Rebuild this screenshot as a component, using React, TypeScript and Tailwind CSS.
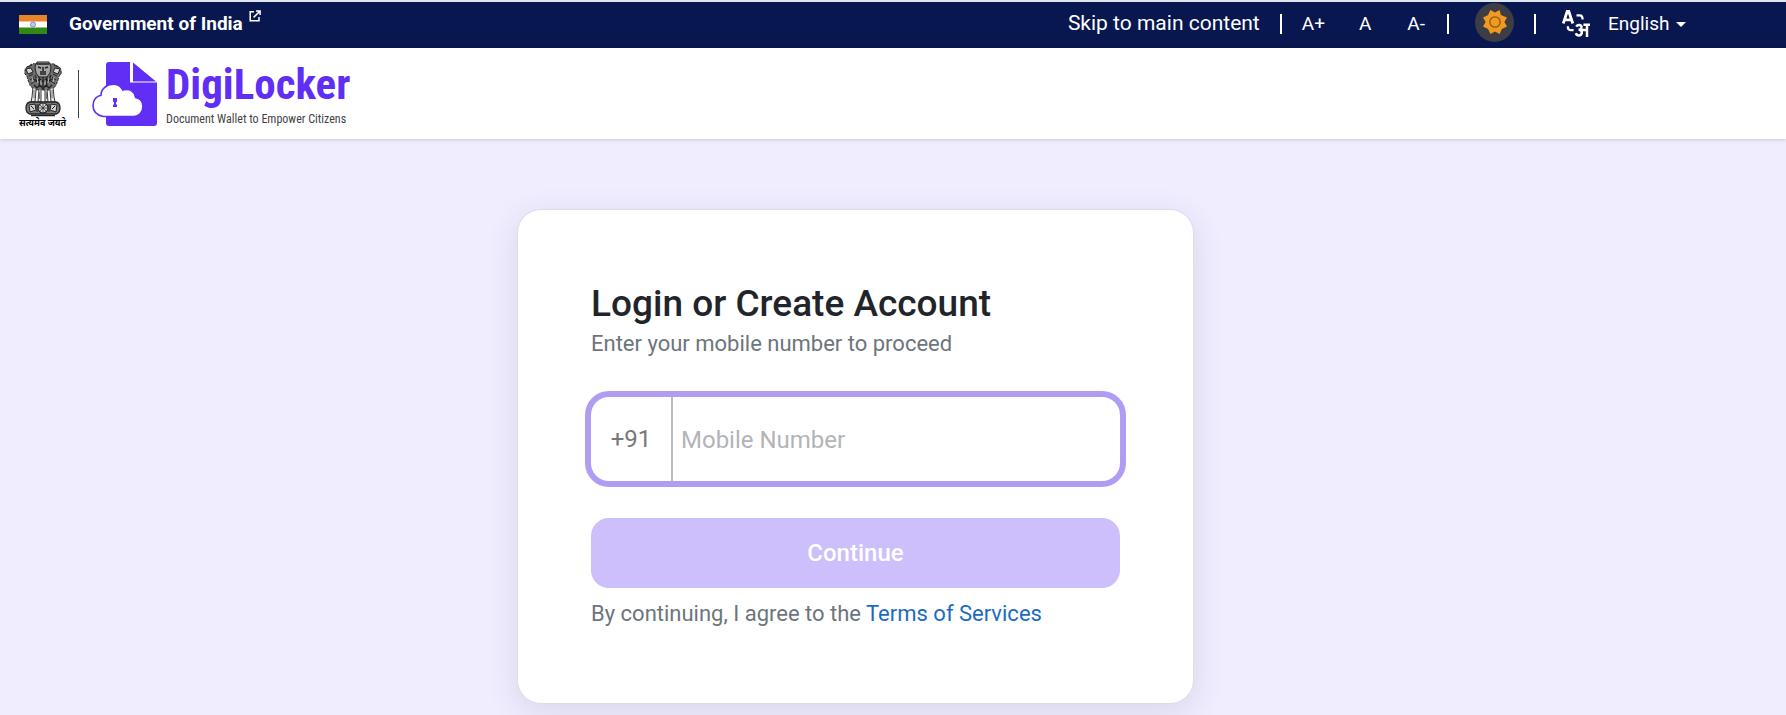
import { useState } from "react";

const FlagIcon = () => (
  <svg className="h-[19px] w-7" viewBox="0 0 28 19" aria-hidden="true">
    <rect width="28" height="19" fill="#fff" />
    <rect width="28" height="6.5" fill="#e8842a" />
    <rect y="12.5" width="28" height="6.5" fill="#2f8a12" />
    <circle cx="14" cy="9.5" r="2.6" fill="#c3c9ea" stroke="#6f78b8" strokeWidth="0.8" />
  </svg>
);

const ExternalIcon = () => (
  <svg
    className="mb-4 h-3 w-3"
    viewBox="0 0 12 12"
    fill="none"
    stroke="#fff"
    strokeWidth="1.5"
    aria-hidden="true"
  >
    <path d="M5 1.7H1.2V10.8H10V7" />
    <path d="M7 .9H11.1V5M11 1 4.6 7.4" />
  </svg>
);

const SunIcon = () => (
  <svg className="h-[26px] w-[26px]" viewBox="-13 -13 26 26" aria-hidden="true">
    <path
      fill="#f29a1f"
      d="M0-9.4 4.6-12 5.9-6.9 12-4.6 9.4 0 12 4.6 6.9 6.9 4.6 12 0 9.4-4.6 12-6.9 6.9-12 4.600-9.4 0-12-4.6-6.9-6.9-4.6-12Z"
    />
    <circle r="5.2" fill="#f29a1f" stroke="#8a5a1c" strokeWidth="1.3" />
  </svg>
);

const TranslateIcon = () => (
  <svg
    className="h-7 w-7"
    viewBox="0 0 28 28"
    fill="none"
    stroke="#fff"
    strokeWidth="2.8"
    aria-hidden="true"
  >
    <path d="M1.2 13.5 5.2 1.5H6.8L10.8 13.5M2.8 9.8H9.2" />
    <path d="M14.5 5.4H17.6Q20.6 5.4 20.6 9.6" strokeWidth="2.3" />
    <path d="M5.8 16.2Q5.8 20.2 9 20.2H11.6" strokeWidth="2.3" />
    <path
      d="M14.2 16.6Q15.4 14.8 17.4 15 20 15.4 19.4 18 19 19.6 16.6 19.8 20 20 19.8 22.8 19.4 25.4 16.8 25.4 14.6 25.4 13.8 23.2M19.6 20H24.4M21.4 14.8H28M25 14.8V27"
      strokeWidth="2.5"
    />
  </svg>
);

const Emblem = () => (
  <svg
    className="h-[57px] w-10"
    viewBox="0 0 40 57"
    fill="none"
    stroke="#222"
    strokeWidth="1"
    aria-hidden="true"
  >
    {/* manes and side heads */}
    <path
      d="M13 3Q9 2 6 5 2 6 2 10 1 13 4 15 5 20 7 24 9 28 14 29H26Q31 28 33 24 35 20 36 15 39 13 38 10 38 6 34 5 31 2 27 3Z"
      fill="#6f6f6f"
      strokeDasharray="3 1"
    />
    <path
      d="M3 8 8 7 10 11 5 13ZM37 8 32 7 30 11 35 13ZM5 6 9 4M35 6 31 4M6 15 10 13M34 15 30 13M7 19 11 16M33 19 29 16M8 23 12 20M32 23 28 20"
      fill="#d6d6d6"
    />
    {/* front lion */}
    <path d="M14 1H26L28 6 27 12 24 16H16L13 12 12 6Z" fill="#a5a5a5" />
    <path d="M14 3H26M15 6 18 7M25 6 22 7M20 6V10M17 11H23M17 13H23" strokeWidth="1.5" />
    <path
      d="M12 14Q14 17 13 21M16 16Q17 19 16 25M20 16V26M24 16Q23 19 24 25M28 14Q26 17 27 21M11 24 14 27 17 24 20 28 23 24 26 27 29 24M10 18 14 20 17 18 20 21 23 18 26 20 30 18"
      strokeWidth="1.3"
    />
    <path
      d="M14 17 15 22M18 19V24M22 19V24M26 17 25 22M9 16 10 21M31 16 30 21"
      stroke="#d0d0d0"
      strokeWidth="0.8"
    />
    {/* legs */}
    <path
      d="M10 26 9 36 8 41H12L13 29M16 28 15 41H18L18 29M22 29V41H25L24 28M27 29 28 41H32L31 36 30 26"
      fill="#e6e6e6"
      strokeWidth="0.9"
    />
    <path d="M11 29V37M16.500 31V38M23.500 31V38M29 29V37" stroke="#666" strokeWidth="0.9" />
    {/* abacus with the wheel */}
    <path
      d="M7 41H33Q37 42 37 47 37 52 33 53H7Q3 52 3 47 3 42 7 41Z"
      fill="#7d7d7d"
      strokeWidth="1.3"
    />
    <path d="M6 44 12 43 13 49 7 51ZM34 44 28 43 27 49 33 51Z" fill="#d0d0d0" />
    <path d="M8 45 11 48M32 45 29 48M14 43V51M26 43V51" />
    <circle cx="20" cy="47" r="5" fill="#d8d8d8" strokeWidth="1.2" />
    <path d="M20 42V52M15 47H25M16.5 43.5 23.5 50.5M23.5 43.5 16.5 50.5" strokeWidth="0.7" />
    <path d="M8 54.500H32" strokeWidth="1.500" />
  </svg>
);

const LockerMark = () => (
  <svg className="h-[66px] w-[66px]" viewBox="0 0 66 66" aria-hidden="true">
    <path
      fill="#602ef5"
      d="M17 1H38V21.5H65V62Q65 65 62 65H17Q14 65 14 62V4Q14 1 17 1ZM41 1.5 64 20.5H41Z"
    />
    <path
      fill="#fff"
      stroke="#602ef5"
      strokeWidth="1.6"
      d="M11 55.5C4.500 54 1 50 1 44.500 1 39 4.500 35 9 34.200 9 28 15 23.300 21 23.300 25.500 23.300 29 25.500 30.800 29 38 27 43 31 43.600 36.500 48.500 37.500 51 41 51 45.500 51 51 47 55.500 42 55.500Z"
    />
    <path fill="#602ef5" d="M21 37H25V40.500L24 41.500V43.500H25V46H21V43.500H22V41.500L21 40.500Z" />
  </svg>
);

const Divider = () => <span className="h-5 w-0.5 bg-white" aria-hidden="true" />;

function TopBar() {
  const [language, setLanguage] = useState("English");

  return (
    <div className="flex h-[46px] items-center justify-between bg-[#08174f] pr-[100px] pb-0.5 pl-[19px] text-white">
      <a href="#" className="flex items-center">
        <FlagIcon />
        <span className="ml-[22px] text-[19px] font-bold">Government of India</span>
        <span className="ml-1.5">
          <ExternalIcon />
        </span>
      </a>
      <div className="flex items-center text-[19px]">
        <a href="#main" className="mr-5 text-[21px]">
          Skip to main content
        </a>
        <Divider />
        <button className="ml-5">A+</button>
        <button className="ml-[34px]">A</button>
        <button className="mr-[22px] ml-9">A-</button>
        <Divider />
        <button
          aria-label="Toggle theme"
          className="mr-5 mb-1 ml-[26px] flex h-[39px] w-[39px] items-center justify-center rounded-full bg-[#3c3d45]"
        >
          <SunIcon />
        </button>
        <Divider />
        <label htmlFor="language" aria-label="Language" className="mr-[18px] ml-[26px]">
          <TranslateIcon />
        </label>
        <select
          id="language"
          value={language}
          onChange={(e) => setLanguage(e.target.value)}
          className="cursor-pointer appearance-none"
        >
          <option>English</option>
        </select>
        <svg className="ml-1.5 h-[5px] w-2.5" viewBox="0 0 10 5" aria-hidden="true">
          <path d="M0 0H10L5 5Z" fill="#fff" />
        </svg>
      </div>
    </div>
  );
}

function Header() {
  return (
    <header className="flex h-[91px] items-center bg-white pl-[19px] shadow-[0_1px_4px_rgba(0,0,0,0.16)]">
      <div className="flex flex-col items-center pt-1">
        <Emblem />
        <span className="font-['Noto_Sans_Devanagari','Noto_Sans',sans-serif] text-[9px] leading-3 font-bold whitespace-nowrap text-black">
          सत्यमेव जयते
        </span>
      </div>
      <span className="ml-3 h-12 w-px bg-[#444]" />
      <a href="#" className="ml-[13px] flex items-center">
        <LockerMark />
        <span className="ml-2 flex flex-col pt-1 font-['Liberation_Sans_Narrow','Roboto_Condensed','Liberation_Sans',sans-serif]">
          <span className="text-[43px] leading-[46px] font-bold text-[#602ef5]">DigiLocker</span>
          <span className="text-[12px] leading-6 text-[#444]">
            Document Wallet to Empower Citizens
          </span>
        </span>
      </a>
    </header>
  );
}

function LoginCard() {
  const [mobile, setMobile] = useState("");

  return (
    <form
      onSubmit={(e) => e.preventDefault()}
      className="w-full max-w-[677px] rounded-3xl border border-[#dedce8] bg-white px-[73px] pt-[72px] pb-[73px] shadow-[0_8px_32px_rgba(60,50,90,0.12)]"
    >
      <h1 className="text-[37px] leading-[44px] font-medium text-[#212529]">
        Login or Create Account
      </h1>
      <p className="mt-0.5 text-[22px] leading-8 text-[#6c757d]">
        Enter your mobile number to proceed
      </p>
      <div className="mt-[37px] flex h-[84px] rounded-[18px] bg-white ring-6 ring-[#b09cf3]">
        <label
          htmlFor="mobile"
          className="flex w-[82px] items-center justify-center border-r-2 border-[#bdbdbd] text-[24px] text-[#75787b]"
        >
          +91
        </label>
        <input
          id="mobile"
          type="tel"
          value={mobile}
          onChange={(e) => setMobile(e.target.value)}
          placeholder="Mobile Number"
          className="min-w-0 flex-1 rounded-r-[18px] px-2 pt-0.5 text-[24px] outline-none placeholder:text-[#b3b4b8]"
        />
      </div>
      <button
        type="submit"
        className="mt-[37px] h-[70px] w-full rounded-[18px] bg-[#cdbffb] text-[24px] font-medium text-white"
      >
        Continue
      </button>
      <p className="mt-2.5 text-[22px] leading-8 text-[#6c757d]">
        By continuing, I agree to the{" "}
        <a href="#" className="text-[#1d6bc0]">
          Terms of Services
        </a>
      </p>
    </form>
  );
}

function App() {
  return (
    <div className="flex min-h-screen flex-col border-t-2 border-[#dfe6ee] bg-[#f0edff] font-['Roboto',sans-serif]">
      <TopBar />
      <Header />
      <main id="main" className="flex justify-center pt-[70px] pr-[75px] pb-3">
        <LoginCard />
      </main>
    </div>
  );
}

export default App;
